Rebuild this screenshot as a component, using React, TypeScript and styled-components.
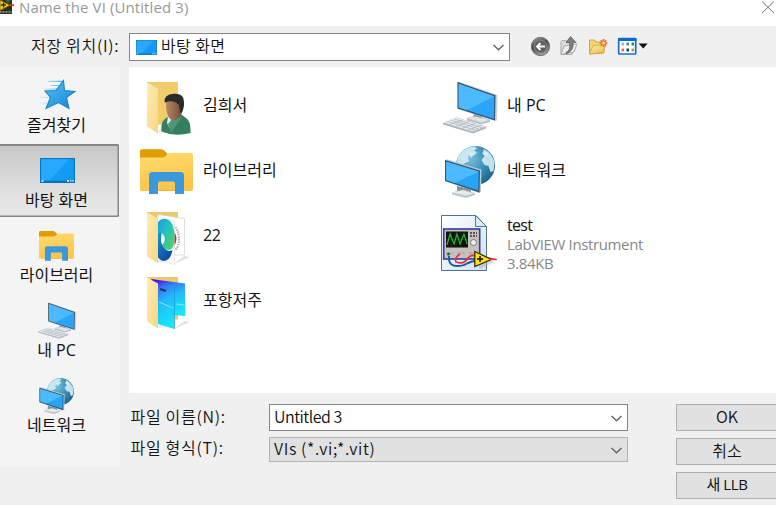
import React from "react";
import styled, { createGlobalStyle, css } from "styled-components";

const Global = createGlobalStyle`
  * { box-sizing: border-box; }
  html, body, #root { margin: 0; width: 100%; height: 100%; overflow: hidden; }
  body { background: #f0f0f0; }
`;

const ui = css`
  font-family: "Open Sans", "Noto Sans CJK KR", sans-serif;
`;
const dialogFont = css`
  font-family: "Noto Sans CJK KR", "Liberation Sans", sans-serif;
  font-weight: 350;
`;

const Window = styled.div`
  ${ui}
  width: 776px;
  height: 505px;
  overflow: hidden;
  background: #f0f0f0;
  color: #111;
  font-size: 16px;
  display: flex;
  flex-direction: column;
`;

const TitleBar = styled.header`
  height: 26px;
  flex: none;
  background: #fff;
  display: flex;
  align-items: flex-start;
  color: #999;
`;

const TitleText = styled.span`
  flex: 1;
  margin-left: 5px;
  line-height: 14px;
  font-size: 15px;
  letter-spacing: 0.1px;
  white-space: nowrap;
`;

const TopRow = styled.div`
  height: 41px;
  flex: none;
  display: flex;
  align-items: flex-start;
  padding-top: 7px;
`;

const FieldLabel = styled.label<{ $width: number; $pad: number; $lineHeight?: number }>`
  ${dialogFont}
  width: ${(p) => p.$width}px;
  padding-left: ${(p) => p.$pad}px;
  letter-spacing: 0.7px;
  font-size: 16px;
  line-height: ${(p) => p.$lineHeight ?? 25}px;
  white-space: nowrap;
  flex: none;
`;

const Combo = styled.div<{ $width: number; $height: number; $muted?: boolean; $gap: number }>`
  ${dialogFont}
  width: ${(p) => p.$width}px;
  height: ${(p) => p.$height}px;
  flex: none;
  display: flex;
  align-items: center;
  padding-left: ${(p) => p.$gap}px;
  padding-right: 4px;
  border: 1px solid ${(p) => (p.$muted ? "#b2b2b2" : "#858585")};
  background: ${(p) => (p.$muted ? "#e1e1e1" : "#fff")};
  svg { flex: none; }
`;

const ComboText = styled.span<{ $spacing: number; $left?: number }>`
  flex: 1;
  margin-left: ${(p) => p.$left ?? 0}px;
  margin-top: -4px;
  line-height: 22px;
  letter-spacing: ${(p) => p.$spacing}px;
  white-space: nowrap;
`;

const Tools = styled.div`
  display: flex;
  align-items: center;
  height: 27px;
  margin-left: 19px;
`;

const Middle = styled.div`
  display: flex;
  flex: 1;
`;

const Places = styled.nav`
  width: 120px;
  flex: none;
  height: 400px;
  padding-top: 2px;
  background: #f4f4f4;
  display: flex;
  flex-direction: column;
  gap: 2px;
`;

const Place = styled.div<{ $selected?: boolean }>`
  width: 119px;
  height: 73px;
  padding: 6px 6px 0 0;
  display: flex;
  flex-direction: column;
  align-items: center;
  ${(p) =>
    p.$selected &&
    css`
      background: linear-gradient(#c6c6c6, #e4e4e4 75%, #e7e7e7);
      box-shadow: inset 0 2px 0 #858585, inset -1.5px 0 0 #858585, inset 0 -1.5px 0 #858585;
      border-radius: 0 2px 2px 0;
    `}
`;

const PlaceIcon = styled.div`
  height: 40px;
  padding-left: 1px;
  display: flex;
  align-items: center;
`;

const PlaceName = styled.span`
  line-height: 20px;
  white-space: nowrap;
`;

const Content = styled.div`
  margin-left: 9px;
  flex: 1;
  min-width: 0;
  display: flex;
  flex-direction: column;
`;

const FileList = styled.div`
  height: 326px;
  padding: 6px 0 0 8px;
  background: #fff;
  display: grid;
  grid-template-columns: 303px 1fr;
  grid-template-rows: repeat(4, 65px);
`;

const FileItem = styled.div<{ $drop?: number }>`
  display: flex;
  align-items: center;
  gap: 6px;
  padding-top: ${(p) => p.$drop ?? 0}px;
  svg { flex: none; }
  &:nth-child(even) { gap: 7px; }
`;

const FileText = styled.div`
  display: flex;
  flex-direction: column;
  line-height: 19px;
  white-space: nowrap;
`;

const FileName = styled.span<{ $spacing?: number }>`
  letter-spacing: ${(p) => p.$spacing ?? 0}px;
`;

const Detail = styled.span`
  color: #888;
  font-size: 15px;
  letter-spacing: -0.37px;
`;

const Form = styled.div`
  display: flex;
  padding-top: 11px;
`;

const Fields = styled.div`
  display: flex;
  flex-direction: column;
  gap: 6px;
  width: 547px;
  flex: none;
`;

const Field = styled.div<{ $height: number }>`
  display: flex;
  height: ${(p) => p.$height}px;
`;

const Buttons = styled.div`
  display: flex;
  flex-direction: column;
  gap: 7px;
`;

const Button = styled.button<{ $system?: boolean }>`
  ${(p) => (p.$system ? ui : dialogFont)}
  width: 110px;
  height: 27px;
  flex: none;
  padding: 0 8px 4px 0;
  border: 1px solid #adadad;
  background: #e1e1e1;
  color: #111;
  font-size: ${(p) => (p.$system ? 15 : 16)}px;
  letter-spacing: ${(p) => (p.$system ? -0.4 : 0)}px;
  line-height: 20px;
`;

const Chevron = () => (
  <svg width="13" height="10" viewBox="0 0 13 10" fill="none" stroke="#666" strokeWidth="1.5">
    <path d="M1.5 3 6.500 7.700l5-4.700" />
  </svg>
);

const Monitor = ({ w = 35, h = 25 }: { w?: number; h?: number }) => (
  <svg width={w} height={h} viewBox="0 0 35 25" preserveAspectRatio="none">
    <rect x=".6" y=".6" width="33.8" height="23.8" fill="#119bf5" stroke="#0875be" strokeWidth="1.2" />
    <path d="M1.2 22V1.2H29L10 22z" fill="#27a9ff" />
    <path d="M1 22.7h33v1.6H1z" fill="#0870b4" />
    <path d="M1.5 23h2M27 23h2m1.2 0h1.2m1 0h1.2" stroke="#fff" strokeWidth="1.3" />
  </svg>
);

const Star = () => (
  <svg width="40" height="32" viewBox="38 80 40 32">
    <defs>
      <linearGradient id="star" x2=".8" y2="1">
        <stop stopColor="#56c5f8" />
        <stop offset="1" stopColor="#1589d8" />
      </linearGradient>
      <linearGradient id="trail" gradientUnits="userSpaceOnUse" x1="39" x2="60" y1="0" y2="0">
        <stop stopColor="#8fd0f2" stopOpacity=".1" />
        <stop offset="1" stopColor="#5fb9ea" />
      </linearGradient>
    </defs>
    <path d="M49 81.800H64V83H49zM52 86H63V87H52zM46 89.500H60V90.500H46zM41 98H52V99H41zM39 103.500H50V104.500H39z" fill="url(#trail)" />
    <path d="M64.500 81.500 65.500 91.500 76 92.500 67.500 98.500 70 109.500 59.500 103.500 47 109.500 51.500 98.500 46 92 57 91.500z" fill="url(#star)" stroke="#1a83c9" strokeWidth="1.1" />
  </svg>
);

const LibraryIcon = ({ scale = 1 }: { scale?: number }) => (
  <svg width={60 * scale} height={50 * scale} viewBox="137 146 60 50">
    <defs>
      <linearGradient id="lib" x2=".3" y2="1">
        <stop stopColor="#ffdc70" />
        <stop offset="1" stopColor="#fcc548" />
      </linearGradient>
    </defs>
    <path d="M140 163v-12q0-1.800 2-1.800h19q2 0 3.500 1.500l3 3V163z" fill="#df9d00" />
    <path d="M140 157.500h22q2 0 3.500-1.500l2-2q1.200-1 3-1h20.500q2 0 2 2v34q0 2-2 2h-49q-2 0-2-2z" fill="url(#lib)" />
    <path d="M149 194v-18.500q0-3.500 3.500-3.500h28q3.500 0 3.500 3.500V194h-9v-10.500q0-2-2-2h-13q-2 0-2 2V194z" fill="#3b98df" />
    <path d="M158 190h17v1h-17z" fill="#efb43b" />
  </svg>
);

const ComputerIcon = ({ scale = 1 }: { scale?: number }) => (
  <svg width={60 * scale} height={56 * scale} viewBox="440 77 60 56">
    <path d="M467 117 476 114.500 490 118.500V121l-9 2.500-14-4z" fill="#b8c2c9" />
    <path d="M473 110 482 113v6l-8-2z" fill="#8898a2" />
    <path d="M467 117 476 115.500 489 119l-8 2.500z" fill="#dfe5e8" />
    <path d="M443 122 457 116.500 486 125.500v2L473 132.500 443 123.500z" fill="#aeb8bf" />
    <path d="M443.500 121.500 457 116.800 485.500 125.500 472.500 130.500z" fill="#e7ebee" />
    <path d="M447 120.300 476 129.300M450.500 119 479 128M454 117.900 482.500 126.800M450 123.700 463 118.800M456 125.500 469 120.500M462 127.300 475 122.400M468 129.200 481 124.200" stroke="#aeb8c0" strokeWidth=".8" />
    <path d="M457.500 81 459.500 80.800 497.500 94 497 119.500 495 120 457.500 108z" fill="#c9d2d8" />
    <path d="M457.500 81 495.500 94.300 495 119.500 457.500 107.500z" fill="#37505f" />
    <path d="M458.700 82.800 494.300 95.300 494 118 458.700 106.500z" fill="#2aa5fb" />
    <path d="M458.700 82.800 494.300 95.300 467 109.200 458.700 106.500z" fill="#4db9ff" />
  </svg>
);

const NetworkIcon = ({ scale = 1 }: { scale?: number }) => (
  <svg width={60 * scale} height={56 * scale} viewBox="440 143 60 56">
    <defs>
      <radialGradient id="globe" cx=".35" cy=".3" r=".75">
        <stop stopColor="#7dc0dc" />
        <stop offset=".6" stopColor="#358db4" />
        <stop offset="1" stopColor="#1c6588" />
      </radialGradient>
    </defs>
    <circle cx="475.500" cy="165.500" r="19.500" fill="url(#globe)" />
    <path d="M458 157q4-7 12-10l5-.5 2 2-3 2 3 2-3 3-4-1-2 3 1 4-5 2-3 4-5-1zM484 149q9 5 10.500 14l-1 8-3 1-2-6-4-1-3-5 3-4-2-3z" fill="#d3edf4" opacity=".9" />
    <path d="M469 153l5 1-3 4zM482 154l5-2 1 4z" fill="#ddf3f7" />
    <path d="M457 186 471 189v5l-14-2z" fill="#82929b" />
    <path d="M452 192.500 463 189.500 475 193V195l-9 3-14-3.500z" fill="#bdc6cb" />
    <path d="M452 192.500 463 190.500 474 193.500l-8 2z" fill="#e5eaed" />
    <path d="M445 160 447 159.300 481.500 169.500 481 192 479 193 445 181z" fill="#bcc8cf" />
    <path d="M445 160 480 170.500 479.500 192.500 445 181z" fill="#2d5970" />
    <path d="M446.200 161.700 478.700 171.500 478.300 190.500 446.200 180z" fill="#28a5f8" />
    <path d="M446.200 161.700 478.700 171.500 455 183 446.200 180z" fill="#4bbafe" />
  </svg>
);

const FolderShell = ({ children, thin }: { children: React.ReactNode; thin?: boolean }) => (
  <svg width="60" height="60" viewBox="137 76 60 60">
    <defs>
      <linearGradient id="flap" x2="1" y2="1">
        <stop stopColor="#ffedb0" />
        <stop offset="1" stopColor="#f7d684" />
      </linearGradient>
    </defs>
    <path d="M147 82h31v42.500h-31z" fill={thin ? "#edc968" : "#f0cc6b"} />
    <path d="M157 133 163 123h8v9z" fill="#d8dcdf" opacity=".5" />
    {thin && <path d="M174 134 190 127 184 126z" fill="#e2e2e2" />}
    {children}
    <path d="M147 82.500 158 88.500V133.500L147 126.500z" fill="url(#flap)" />
  </svg>
);

const UserFolder = () => (
  <FolderShell>
    <defs>
      <linearGradient id="skin" x2="1">
        <stop stopColor="#b98962" />
        <stop offset="1" stopColor="#6d4934" />
      </linearGradient>
    </defs>
    <path d="M161.500 131.500q-1-11 5.500-14l6-3 9 .5 4 3q5 3 4.500 15-16 4-29-1.500z" fill="#357f61" />
    <path d="M168 116.500 178 115l1 5-8 11-4-8z" fill="#e9eef0" />
    <path d="M173 118 168 124l3 9 9-13 1-6z" fill="#4c9678" />
    <path d="M166 103q0-7 8.500-8 8.500 1 8.500 11 0 11-7.500 14-6 1.500-8-5.500-2-5-1.500-11.500z" fill="url(#skin)" />
    <path d="M164.500 102.500q-1-8 9.500-8.800 10-.5 10 8 .5 6-2.500 11l-1.500-1-1-7q-3-3-7-3.500-4 0-7.500 1.300z" fill="#292a2c" />
  </FolderShell>
);

const BrowserFolder = () => (
  <FolderShell thin>
    <defs>
      <linearGradient id="swirl" x2="1" y2="1">
        <stop stopColor="#159bd8" />
        <stop offset=".45" stopColor="#22c4c3" />
        <stop offset="1" stopColor="#5bd347" />
      </linearGradient>
      <linearGradient id="lower" x2=".6" y2="1">
        <stop stopColor="#1597d8" />
        <stop offset="1" stopColor="#114a9d" />
      </linearGradient>
    </defs>
    <path d="M158 84.500 184.500 88.500V125H160z" fill="#fff" stroke="#d1d1d1" strokeWidth=".7" />
    <path d="M175.500 97q3.500 5 3.500 12t-3.500 11" stroke="#aaa" strokeWidth="2" strokeDasharray="1.500 1" fill="none" />
    <path d="M157 86 174.500 91V134.500L157 130z" fill="#fafafa" stroke="#d6d6d6" strokeWidth=".5" />
    <path d="M174.500 102.500q4 5 0 13z" fill="#df1754" />
    <path d="M158 92Q163 86 170 91q4.500 5 4.500 15 0 14-6 14-6-1-7-5 4-2 3-8-2-5-6.500-4z" fill="url(#swirl)" />
    <path d="M158 103q4-2 3.500 2-2 9 3.500 14 4 3.500 7.500 1-2 11-9 11-4-1-5.500-3.500z" fill="url(#lower)" />
  </FolderShell>
);

const PictureFolder = () => (
  <FolderShell thin>
    <defs>
      <linearGradient id="picture" x1=".2" x2=".5" y2="1">
        <stop stopColor="#5700ee" />
        <stop offset=".22" stopColor="#3973f6" />
        <stop offset=".5" stopColor="#20bafa" />
        <stop offset="1" stopColor="#16e5fa" />
      </linearGradient>
    </defs>
    <path d="M151 84 185 88.500V121l-12-1z" fill="url(#picture)" />
    <path d="M151 84 174.500 92.500V134L158 129V89z" fill="url(#picture)" />
    <path d="M174.500 92.500V134" stroke="#208dca" strokeWidth=".6" />
    <path d="M160 94 166 96" stroke="#17395c" strokeWidth="2.300" />
    <path d="M159 107 173 113M176 109l8 1" stroke="#a7eafe" strokeWidth=".8" />
  </FolderShell>
);

const InstrumentIcon = () => (
  <svg width="60" height="60" viewBox="441 214 60 60">
    <defs>
      <linearGradient id="sheet" x2="1" y2="1">
        <stop stopColor="#fff" />
        <stop offset="1" stopColor="#cfe2f4" />
      </linearGradient>
    </defs>
    <path d="M442.500 215.500h34.500l10.500 11V270.500h-45z" fill="url(#sheet)" stroke="#526f94" />
    <path d="M476.500 215.500V226.500h11z" fill="#d8eaff" stroke="#54779f" />
    <rect x="444.700" y="229" width="36" height="30" fill="#c7c2bb" stroke="#373aa5" strokeWidth="1.600" />
    <rect x="447" y="231.500" width="22" height="16" fill="#111" />
    <path d="M447 239.500h22M452 232v15m5-15v15m5-15v15" stroke="#244c2a" strokeWidth=".6" />
    <path d="M448 245 451 234 455 244 458 234 461 244 465 234 468 244" stroke="#22b92b" strokeWidth="1.200" fill="none" />
    <path d="M471 233h7m-7 3h7" stroke="#33343c" strokeWidth="1.500" strokeDasharray="2 1" />
    <circle cx="474.500" cy="242.500" r="3" fill="#eee" stroke="#777" />
    <path d="M447 253h8m3 0h8m3 0h6" stroke="#aaa" strokeWidth="1" />
    <circle cx="449.500" cy="254" r="1.500" fill="#0b6c4a" />
    <path d="M450 256v4q1 6 8 6 6 0 9-2 6-3 9-3" stroke="#17599d" strokeWidth="1.800" fill="none" />
    <path d="M461 254q-6 4-4 8 8 3 12-4 3-4 8-2l20 3.500" stroke="#f02e36" strokeWidth="1.600" fill="none" />
    <path d="M478 252.500 493.500 260 478 267z" fill="#aaa" opacity=".4" transform="translate(2 2)" />
    <path d="M475.800 251.500 492.500 259.500 475.800 266.500z" fill="#ffdf16" stroke="#332d0d" strokeWidth="1.300" />
    <path d="M478 259h6m-3-3v6" stroke="#111" strokeWidth="1.500" />
    <path d="M491 259.500h7" stroke="#ed3a45" strokeWidth="1.300" />
  </svg>
);

const AppIcon = () => (
  <svg width="14" height="15" viewBox="0 0 14 15">
    <path d="M0 0h12v14H0z" fill="#302e16" />
    <path d="M5 0h6l-3 3z" fill="#27722b" />
    <path d="M0 11h12v2H0z" fill="#89877b" />
    <path d="M1 12h2m1 0h2m1 0h2m1 0h2" stroke="#222" />
    <path d="M0 0 10 5.200 0 10.500z" fill="#f8dd19" stroke="#80610c" />
    <path d="M1 5h5M3.500 2.500v5" stroke="#2c260a" strokeWidth="1.400" />
    <path d="M10 5.200h4" stroke="#e92c20" strokeWidth="1.800" />
  </svg>
);

const ToolIcons = () => (
  <Tools>
    <svg width="120" height="24" viewBox="529 35 120 24">
      <defs>
        <linearGradient id="back" y2="1" x2=".4">
          <stop stopColor="#aaa" />
          <stop offset=".5" stopColor="#444" />
          <stop offset="1" stopColor="#999" />
        </linearGradient>
        <linearGradient id="gold" x2="1" y2="1">
          <stop stopColor="#fff3ad" />
          <stop offset="1" stopColor="#e9b63d" />
        </linearGradient>
      </defs>
      <circle cx="540.500" cy="46.500" r="9.200" fill="url(#back)" stroke="#777" />
      <circle cx="540.500" cy="46.500" r="6.400" fill="#5e5e5e" stroke="#888" />
      <path d="M545 46.500h-8m3.500-3.500-3.500 3.500 3.500 3.500" fill="none" stroke="#fff" strokeWidth="1.800" />
      <path d="M561 54.500v-13l1-1h4l1 2h5v12z" fill="#ddd" stroke="#aaa" />
      <path d="M561 54.500 564 46l13-2-3 8z" fill="#efefef" stroke="#aaa" />
      <path d="M566 52.500q5-2 3.500-10H566l4.500-6 5.500 6h-3q1 9-7 11z" fill="#808080" stroke="#555" strokeWidth=".7" />
      <path d="M589.500 54V40h5l1.500 2h8v11z" fill="#f6d677" stroke="#d3a24f" />
      <path d="M589.500 54 593 45.500l13-1-3 8z" fill="url(#gold)" stroke="#d4a444" strokeWidth=".8" />
      <path d="M603.500 39v8m-4-4h8m-6.800-2.800 5.600 5.600m0-5.600-5.600 5.600" stroke="#f36a2b" strokeWidth="1.600" />
      <circle cx="603.500" cy="43" r="1.500" fill="#ffe39d" />
      <rect x="618.700" y="38.500" width="17" height="15.500" rx=".8" fill="#fff" stroke="#1370d2" strokeWidth="1.700" />
      <path d="M618 38h18.500v3H618z" fill="#0b68d8" />
      <path d="M621.500 42.500h2.500v3h-2.500z" fill="#aaa9cf" />
      <path d="M626.500 42.500h2.500v3h-2.500z" fill="#4182e1" />
      <path d="M631.500 42.500h2.500v3h-2.500z" fill="#1c9d35" />
      <path d="M621.500 48.500h2.500v3h-2.500z" fill="#ee6e48" />
      <path d="M626.500 48.500h2.500v3h-2.500z" fill="#173d98" />
      <path d="M631.500 48.500h2.500v3h-2.500z" fill="#c19b21" />
      <path d="M638.700 43.500h9L643.200 48.500z" fill="#111" />
    </svg>
  </Tools>
);

const places = [
  { name: "즐겨찾기", icon: <Star /> },
  { name: "바탕 화면", icon: <Monitor />, selected: true },
  { name: "라이브러리", icon: <LibraryIcon scale={0.66} /> },
  { name: "내 PC", icon: <ComputerIcon scale={0.7} /> },
  { name: "네트워크", icon: <NetworkIcon scale={0.69} /> },
];

const files = [
  { name: "김희서", icon: <UserFolder /> },
  { name: "내 PC", icon: <ComputerIcon /> },
  { name: "라이브러리", icon: <LibraryIcon /> },
  { name: "네트워크", icon: <NetworkIcon /> },
  { name: "22", icon: <BrowserFolder />, spacing: -0.4 },
  { name: "test", icon: <InstrumentIcon />, drop: 17, spacing: -0.7, details: ["LabVIEW Instrument", "3.84KB"] },
  { name: "포항저주", icon: <PictureFolder /> },
];

export default function App() {
  return (
    <>
      <Global />
      <Window>
        <TitleBar>
          <AppIcon />
          <TitleText>Name the VI (Untitled 3)</TitleText>
          <svg width="15" height="15" viewBox="761 0 15 15">
            <path d="M762 1.500 774 13M774 1.500 762 13" stroke="#777" strokeWidth="1" />
          </svg>
        </TitleBar>
        <TopRow>
          <FieldLabel $width={129} $pad={31}>저장 위치(I):</FieldLabel>
          <Combo $width={381} $height={28} $gap={6}>
            <Monitor w={21} h={15} />
            <ComboText $left={4} $spacing={0.4}>바탕 화면</ComboText>
            <Chevron />
          </Combo>
          <ToolIcons />
        </TopRow>
        <Middle>
          <Places>
            {places.map((p) => (
              <Place key={p.name} $selected={p.selected}>
                <PlaceIcon>{p.icon}</PlaceIcon>
                <PlaceName>{p.name}</PlaceName>
              </Place>
            ))}
          </Places>
          <Content>
            <FileList>
              {files.map((f) => (
                <FileItem key={f.name} $drop={f.drop}>
                  {f.icon}
                  <FileText>
                    <FileName $spacing={f.spacing}>{f.name}</FileName>
                    {f.details?.map((d) => <Detail key={d}>{d}</Detail>)}
                  </FileText>
                </FileItem>
              ))}
            </FileList>
            <Form>
              <Fields>
                <Field $height={27}>
                  <FieldLabel $width={140} $pad={1.5}>파일 이름(N):</FieldLabel>
                  <Combo $width={359} $height={27} $gap={4}>
                    <ComboText $spacing={-0.5}>Untitled 3</ComboText>
                    <Chevron />
                  </Combo>
                </Field>
                <Field $height={25}>
                  <FieldLabel $width={140} $pad={1.5} $lineHeight={20}>파일 형식(T):</FieldLabel>
                  <Combo $width={359} $height={25} $gap={4} $muted>
                    <ComboText $spacing={0.6}>VIs (*.vi;*.vit)</ComboText>
                    <Chevron />
                  </Combo>
                </Field>
              </Fields>
              <Buttons>
                <Button>OK</Button>
                <Button>취소</Button>
                <Button $system>새 LLB</Button>
              </Buttons>
            </Form>
          </Content>
        </Middle>
      </Window>
    </>
  );
}
